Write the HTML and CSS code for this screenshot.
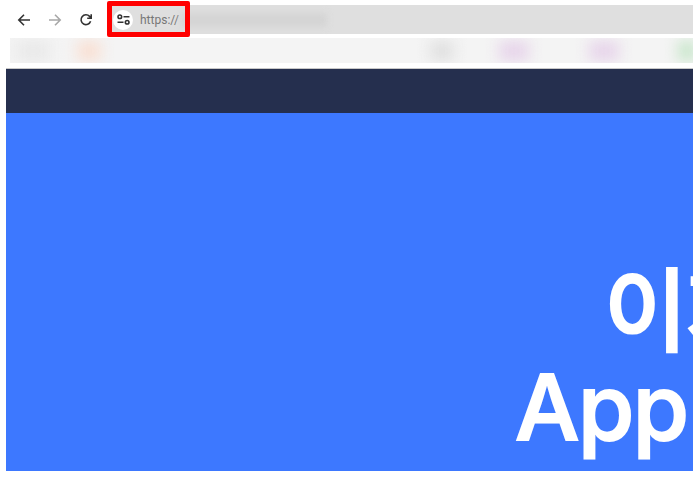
FILE: index.html
```html
<!DOCTYPE html>
<html lang="ko">
<head>
    <meta charset="UTF-8">
    <meta name="viewport" content="width=device-width, initial-scale=1.0">
    <title>App</title>
    <link rel="stylesheet" href="styles.css">
</head>
<body>
    <div class="toolbar">
        <div class="nav-buttons">
            <svg class="nav-icon" viewBox="0 0 14 14"><path d="M13 7H2M7 1.8 1.8 7 7 12.2" /></svg>
            <svg class="nav-icon nav-icon-off" viewBox="0 0 14 14"><path d="M1 7h11M7 1.8 12.2 7 7 12.2" /></svg>
            <svg class="nav-icon" viewBox="0 0 14 14"><path d="M11.6 8.2A4.9 4.9 0 1 1 10.6 3.4L12 4.8M12.2 1.2v4h-4" /></svg>
        </div>
        <div class="address-bar">
            <span class="site-icon">
                <svg viewBox="0 0 14 12"><circle cx="3" cy="3" r="2" /><path d="M7 3H13.5M.5 9H7" /><circle cx="11" cy="9" r="2" /></svg>
            </span>
            <span class="url">https://</span>
            <span class="url-hidden"></span>
            <div class="highlight"></div>
        </div>
    </div>

    <!-- Marcadores difuminados -->
    <div class="bookmarks">
        <div class="blobs">
            <span class="blob blob-gray"></span>
            <span class="blob blob-orange"></span>
            <span class="blob blob-dark"></span>
            <span class="blob blob-purple"></span>
            <span class="blob blob-purple blob-purple-two"></span>
            <span class="blob blob-green"></span>
        </div>
    </div>

    <div class="page">
        <div class="topbar"></div>
        <div class="hero">
            <h1 class="hero-title">
                <span class="line line-one">이제</span>
                <span class="line line-two">App</span>
            </h1>
        </div>
    </div>
</body>
</html>
```

FILE: styles.css
```css
body {
    margin: 0;
    background-color: #fff;
    font-family: "Inter", "Noto Sans CJK KR", sans-serif;
    height: 477px;
    overflow: hidden;
}
.toolbar {
    display: flex;
    align-items: center;
    height: 29px;
    padding: 5px 7px 0 0;
}
.nav-buttons {
    display: flex;
    gap: 17px;
    width: 107px;
    padding-left: 17px;
    box-sizing: border-box;
}
.nav-icon {
    width: 14px;
    height: 14px;
    fill: none;
    stroke: #333;
    stroke-width: 1.6;
}
.nav-icon-off {
    stroke: #a8a8a8;
}
.address-bar {
    flex: 1;
    position: relative;
    display: flex;
    align-items: center;
    height: 29px;
    background-color: #dfdfdf;
}
.site-icon {
    display: flex;
    align-items: center;
    justify-content: center;
    width: 20px;
    height: 20px;
    margin-left: 6px;
    border-radius: 50%;
    background-color: #fff;
}
.site-icon svg {
    width: 13px;
    height: 11px;
    fill: none;
    stroke: #333;
    stroke-width: 1.7;
}
.url {
    margin-left: 7px;
    font-family: "Roboto", sans-serif;
    font-size: 12px;
    color: #777;
}
.url-hidden {
    width: 146px;
    height: 14px;
    margin-left: 2px;
    background-color: #d4d4d4;
    filter: blur(3px);
}
.highlight {
    position: absolute;
    left: 0;
    top: -4px;
    width: 73px;
    height: 26px;
    border: 5px solid #f00;
    border-radius: 2px;
}
.bookmarks {
    height: 25px;
    margin: 4px 7px 0 10px;
    background-color: #f4f4f4;
    overflow: hidden;
}
.blobs {
    display: flex;
    align-items: center;
    height: 25px;
    filter: blur(7px);
}
.blob {
    height: 20px;
    flex: none;
}
.blob-gray {
    width: 34px;
    margin-left: 6px;
    background-color: #e9e9e9;
}
.blob-orange {
    width: 24px;
    margin-left: 27px;
    background-color: #f9e0d4;
}
.blob-dark {
    width: 24px;
    margin-left: 329px;
    background-color: #e0e0e0;
}
.blob-purple {
    width: 30px;
    margin-left: 45px;
    background-color: #e7d5ea;
}
.blob-purple-two {
    margin-left: 60px;
}
.blob-green {
    width: 18px;
    margin-left: 59px;
    background-color: #c8e6ca;
}
.page {
    margin: 5px 7px 0 6px;
    border-top: 1px solid #c8c8c8;
}
.topbar {
    height: 44px;
    background-color: #252f4e;
}
.hero {
    height: 358px;
    background-color: #3d78ff;
    overflow: hidden;
}
.hero-title {
    margin: 0;
    padding-top: 150px;
    color: #fff;
    font-size: 91px;
    font-weight: 500;
    -webkit-text-stroke: 2px #fff;
    letter-spacing: -1.5px;
    line-height: 96px;
    white-space: nowrap;
}
.line {
    display: block;
}
.line-one {
    padding-left: 598px;
}
.line-two {
    padding-left: 509px;
}
```
